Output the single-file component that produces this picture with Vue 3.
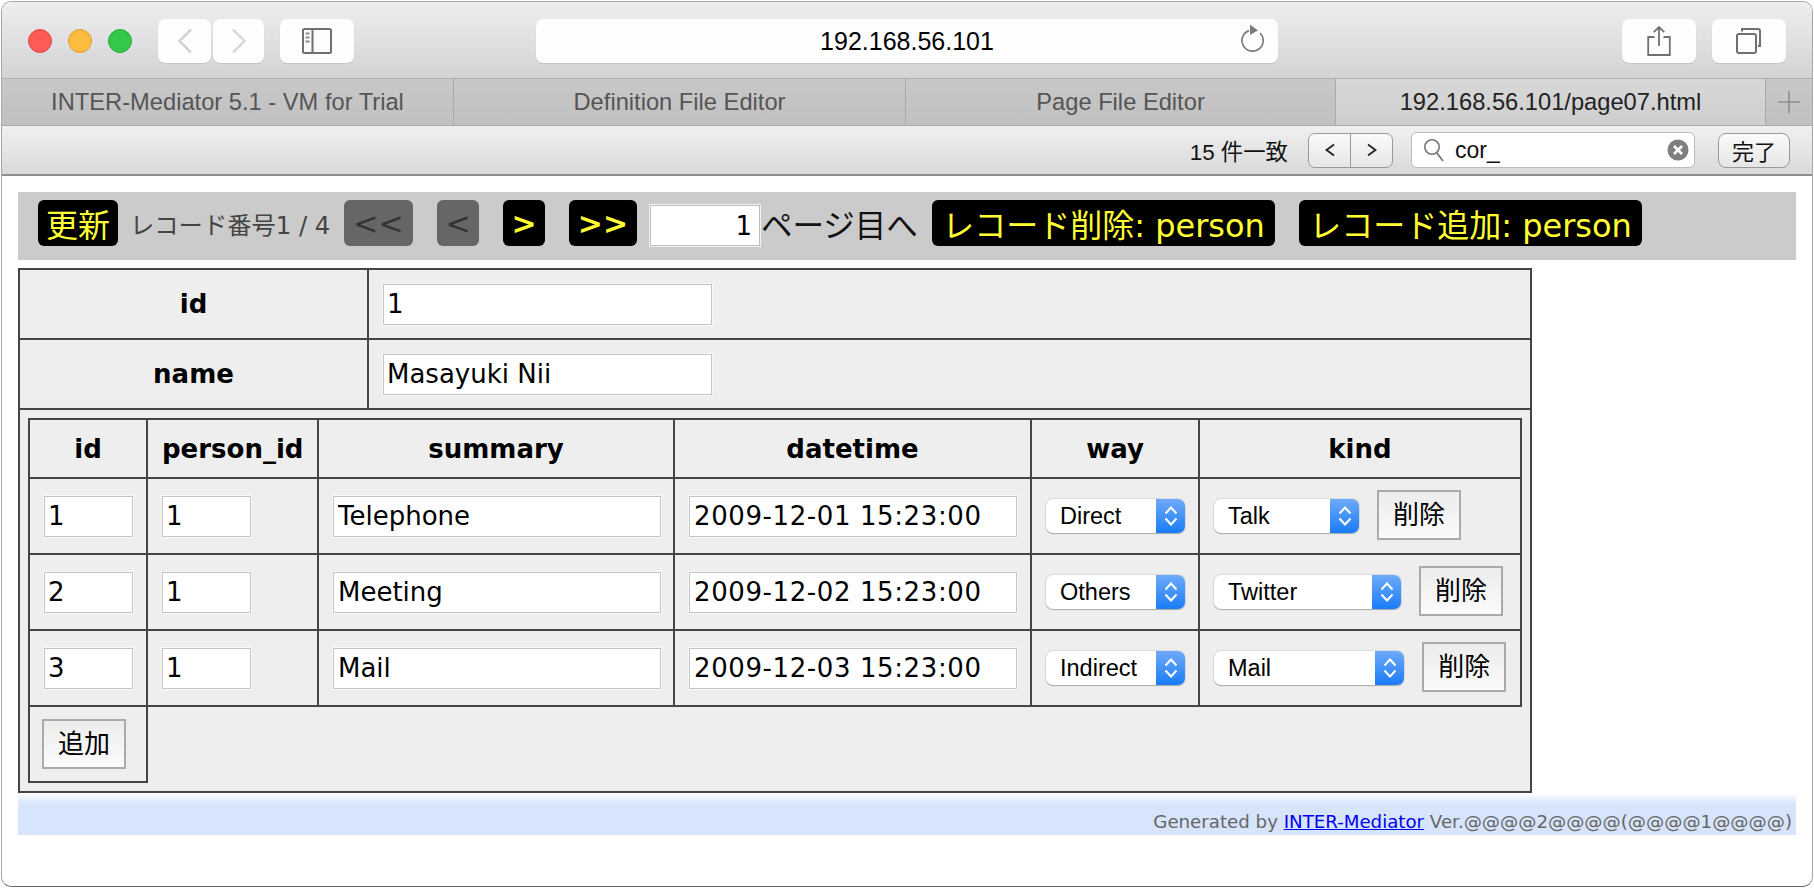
<script setup>
const tabs = [
  { label: 'INTER-Mediator 5.1 - VM for Trial', width: 452 },
  { label: 'Definition File Editor', width: 452 },
  { label: 'Page File Editor', width: 430 },
  { label: '192.168.56.101/page07.html', width: 430, active: true }
]
const rows = [
  { id: '1', pid: '1', summary: 'Telephone', dt: '2009-12-01 15:23:00', way: 'Direct', kind: 'Talk', kw: 145 },
  { id: '2', pid: '1', summary: 'Meeting', dt: '2009-12-02 15:23:00', way: 'Others', kind: 'Twitter', kw: 187 },
  { id: '3', pid: '1', summary: 'Mail', dt: '2009-12-03 15:23:00', way: 'Indirect', kind: 'Mail', kw: 191 }
]
</script>

<template>
  <div class="window">
    <header class="toolbar">
      <span class="light red"></span>
      <span class="light yellow"></span>
      <span class="light green"></span>
      <div class="tb back">
        <svg width="16" height="26" viewBox="0 0 16 26"><path d="M14 1.500 2.500 13 14 24.500" fill="none" stroke="#cfcfcf" stroke-width="2.400"/></svg>
      </div>
      <div class="tb fwd">
        <svg width="16" height="26" viewBox="0 0 16 26"><path d="M2 1.500 13.500 13 2 24.500" fill="none" stroke="#d6d6d6" stroke-width="2.400"/></svg>
      </div>
      <div class="tb side">
        <svg width="30" height="26" viewBox="0 0 30 26"><rect x="1" y="1" width="28" height="24" rx="1.500" fill="none" stroke="#707070" stroke-width="2"/><path d="M10.500 1v24" stroke="#707070" stroke-width="2"/><path d="M3.500 5.500h4M3.500 9.500h4M3.500 13.500h4" stroke="#8a8a8a" stroke-width="2"/></svg>
      </div>
      <div class="address">
        <span>192.168.56.101</span>
        <svg class="reload" width="24" height="30" viewBox="0 0 24 30"><path d="M9 7.600A10.600 10.600 0 1 0 20 10" fill="none" stroke="#7d7d7d" stroke-width="1.700"/><path d="M10 1.500 18 7.500 10 12z" fill="#7d7d7d"/></svg>
      </div>
      <div class="tb share">
        <svg width="24" height="30" viewBox="0 0 24 30"><path d="M7.500 11H1.200v18h21.600V11h-6.300" fill="none" stroke="#707070" stroke-width="1.800"/><path d="M12 1v19M6.800 6.200 12 1l5.200 5.200" fill="none" stroke="#707070" stroke-width="1.800"/></svg>
      </div>
      <div class="tb tabsbtn">
        <svg width="26" height="26" viewBox="0 0 26 26"><rect x="1" y="6" width="19" height="19" rx="2" fill="none" stroke="#707070" stroke-width="2"/><path d="M6 3.500V1h16a2 2 0 0 1 2 2v15h-2" fill="none" stroke="#707070" stroke-width="2"/></svg>
      </div>
    </header>

    <nav class="tabbar">
      <div v-for="t in tabs" :key="t.label" class="tab" :class="{ active: t.active }" :style="{ width: t.width + 'px' }">{{ t.label }}</div>
      <div class="plus">
        <svg width="24" height="24" viewBox="0 0 24 24"><path d="M12 1v22M1 12h22" stroke="#8e8e8e" stroke-width="1.600"/></svg>
      </div>
    </nav>

    <div class="findbar">
      <span class="count">15 件一致</span>
      <div class="stepper">
        <span class="step"><svg width="12" height="14" viewBox="0 0 12 14"><path d="M10 1.500 2.500 7 10 12.500" fill="none" stroke="#222" stroke-width="1.800"/></svg></span>
        <span class="step second"><svg width="12" height="14" viewBox="0 0 12 14"><path d="M2 1.500 9.500 7 2 12.500" fill="none" stroke="#222" stroke-width="1.800"/></svg></span>
      </div>
      <div class="search">
        <svg width="22" height="26" viewBox="0 0 22 26"><circle cx="9" cy="10" r="7.200" fill="none" stroke="#777" stroke-width="1.600"/><path d="m14 16 6 8" stroke="#777" stroke-width="1.800"/></svg>
        <span class="query">cor_</span>
        <svg class="clear" width="22" height="22" viewBox="0 0 22 22"><circle cx="11" cy="11" r="10.500" fill="#7f7f7f"/><path d="m7 7 8 8M15 7l-8 8" stroke="#fff" stroke-width="2.600"/></svg>
      </div>
      <button class="done">完了</button>
    </div>

    <main class="page">
      <div class="nav">
        <span class="nb update">更新</span>
        <span class="info">レコード番号1 / 4</span>
        <span class="nb off first">&lt;&lt;</span>
        <span class="nb off prev">&lt;</span>
        <span class="nb next">&gt;</span>
        <span class="nb last">&gt;&gt;</span>
        <input class="pageno" value="1" />
        <span class="goto">ページ目へ</span>
        <span class="nb del">レコード削除: person</span>
        <span class="nb add">レコード追加: person</span>
      </div>

      <table class="outer">
        <colgroup><col class="c-label" /><col /></colgroup>
        <tbody>
          <tr class="head-row">
            <th>id</th>
            <td><input class="field wide" value="1" /></td>
          </tr>
          <tr class="head-row">
            <th>name</th>
            <td><input class="field wide" value="Masayuki Nii" /></td>
          </tr>
          <tr>
            <td colspan="2" class="holder">
              <table class="inner">
                <colgroup>
                  <col class="c1" /><col class="c2" /><col class="c3" /><col class="c4" /><col class="c5" /><col />
                </colgroup>
                <thead>
                  <tr>
                    <th>id</th><th>person_id</th><th>summary</th><th>datetime</th><th>way</th><th>kind</th>
                  </tr>
                </thead>
                <tbody>
                  <tr v-for="r in rows" :key="r.id" class="data">
                    <td><input class="field tiny" :value="r.id" /></td>
                    <td><input class="field tiny" :value="r.pid" /></td>
                    <td><input class="field mid" :value="r.summary" /></td>
                    <td><input class="field mid stamp" :value="r.dt" /></td>
                    <td>
                      <div class="sel way">
                        <span class="sel-text">{{ r.way }}</span>
                        <span class="sel-arrow"><svg width="14" height="22" viewBox="0 0 14 22"><path d="M1.500 8.500 7 2.500l5.500 6M1.500 13.500l5.500 6 5.500-6" fill="none" stroke="#fff" stroke-width="2"/></svg></span>
                      </div>
                    </td>
                    <td>
                      <div class="kindcell">
                        <div class="sel" :style="{ width: r.kw + 'px' }">
                          <span class="sel-text">{{ r.kind }}</span>
                          <span class="sel-arrow"><svg width="14" height="22" viewBox="0 0 14 22"><path d="M1.500 8.500 7 2.500l5.500 6M1.500 13.500l5.500 6 5.500-6" fill="none" stroke="#fff" stroke-width="2"/></svg></span>
                        </div>
                        <button class="act">削除</button>
                      </div>
                    </td>
                  </tr>
                  <tr class="addrow">
                    <td><button class="act">追加</button></td>
                  </tr>
                </tbody>
              </table>
            </td>
          </tr>
        </tbody>
      </table>

      <footer class="foot">
        Generated by <a href="#">INTER-Mediator</a> Ver.@@@@2@@@@(@@@@1@@@@)
      </footer>
    </main>
  </div>
</template>

<style scoped>
.window {
  box-sizing: border-box;
  width: 1812px;
  height: 886px;
  margin: 1px 0 0 1px;
  border: 1px solid #a8a8a8;
  border-bottom-color: #666;
  border-radius: 10px;
  overflow: hidden;
  background: #fff;
  font-family: "DejaVu Sans", sans-serif;
  color: #000;
}
.toolbar {
  display: flex;
  align-items: center;
  box-sizing: border-box;
  height: 77px;
  padding: 2px 0 0 26px;
  background: linear-gradient(#eeedef, #d3d2d4);
  border-bottom: 1px solid #b0b0b0;
}
.light {
  width: 24px;
  height: 24px;
  border-radius: 50%;
  margin-right: 16px;
  box-sizing: border-box;
}
.red { background: #fc5b57; border: 1px solid #e04a45; }
.yellow { background: #fdbc40; border: 1px solid #df9f30; }
.green { background: #33c848; border: 1px solid #29ab3a; }
.tb, .address {
  display: flex;
  align-items: center;
  justify-content: center;
  box-sizing: border-box;
  height: 44px;
  background: #fdfdfd;
  border-radius: 7px;
  box-shadow: 0 1px 1px #c4c4c4;
}
.back { width: 53px; margin-left: 10px; }
.fwd { width: 51px; margin-left: 2px; }
.side { width: 74px; margin-left: 16px; }
.address {
  position: relative;
  width: 742px;
  margin-left: 182px;
  font: 25px "Liberation Sans", sans-serif;
}
.reload { position: absolute; right: 14px; top: 4px; }
.share { width: 74px; margin-left: 344px; }
.tabsbtn { width: 74px; margin-left: 16px; }

.tabbar {
  display: flex;
  height: 47px;
  box-sizing: border-box;
  background: linear-gradient(#c9c8c9, #c1c0c1);
  border-bottom: 1px solid #a9a9a9;
  font: 23.700px "Liberation Sans", sans-serif;
}
.tab {
  display: flex;
  align-items: center;
  justify-content: center;
  box-sizing: border-box;
  border-right: 1px solid #aaa;
  color: #555;
}
.tab.active {
  color: #222;
  background: linear-gradient(#d9d8d9, #cfcecf);
}
.plus {
  flex: 1;
  display: flex;
  align-items: center;
  justify-content: center;
}
.findbar {
  display: flex;
  align-items: center;
  justify-content: flex-end;
  box-sizing: border-box;
  height: 50px;
  padding: 0 22px 0 0;
  background: linear-gradient(#f0f0f0, #d9d9d9);
  border-bottom: 2px solid #8f8f8f;
  font-family: "Liberation Sans", "Noto Sans CJK JP", sans-serif;
}
.count { font-size: 22.400px; color: #111; }
.stepper {
  display: flex;
  width: 85px;
  height: 35px;
  margin-left: 20px;
  box-sizing: border-box;
  border: 1.500px solid #999;
  border-radius: 7px;
  background: linear-gradient(#fafafa, #e6e6e6);
}
.step {
  flex: 1;
  display: flex;
  align-items: center;
  justify-content: center;
}
.step.second { border-left: 1px solid #999; }
.search {
  display: flex;
  align-items: center;
  width: 284px;
  height: 36px;
  margin-left: 18px;
  padding: 0 5px 0 11px;
  box-sizing: border-box;
  border: 1px solid #bcbcbc;
  border-radius: 6px;
  background: #fff;
}
.query { flex: 1; margin-left: 10px; font-size: 23px; color: #111; }
.done {
  width: 72px;
  height: 35px;
  margin-left: 23px;
  padding: 0;
  box-sizing: border-box;
  border: 1.500px solid #999;
  border-radius: 8px;
  background: linear-gradient(#fafafa, #e6e6e6);
  font: 22px "Noto Sans CJK JP", sans-serif;
  color: #111;
}

.page { padding: 16px 16px 0; }
.nav {
  display: flex;
  align-items: flex-start;
  height: 68px;
  box-sizing: border-box;
  padding: 8px 0 0 20px;
  background: #cbcbcb;
}
.nb {
  display: flex;
  align-items: center;
  justify-content: center;
  box-sizing: border-box;
  height: 46px;
  background: #000;
  color: #ff3;
  border-radius: 6px;
  font: 32px "DejaVu Sans", "Noto Sans CJK JP", sans-serif;
  white-space: nowrap;
}
.nb.off { background: #666; color: #333; }
.update { width: 80px; }
.info {
  display: flex;
  align-items: center;
  height: 46px;
  margin-left: 12px;
  width: 214px;
  color: #444;
  font: 24.300px "DejaVu Sans", "Noto Sans CJK JP", sans-serif;
  white-space: nowrap;
}
.first { width: 69px; font-size: 30px; }
.prev { width: 42px; margin-left: 24px; font-size: 30px; }
.next { width: 42px; margin-left: 24px; font-weight: bold; font-size: 30px; }
.last { width: 68px; margin-left: 24px; font-weight: bold; font-size: 30px; }
.pageno {
  width: 112px;
  height: 43px;
  margin: 4px 0 0 12px;
  padding: 0 8px 0 0;
  box-sizing: border-box;
  border: 1px solid #f2f2f2;
  box-shadow: inset 0 0 0 1px #bdbdbd;
  background: #fff;
  text-align: right;
  font: 26px "DejaVu Sans", sans-serif;
  outline: none;
}
.goto {
  display: flex;
  align-items: center;
  height: 46px;
  width: 171px;
  font: 31.500px "Noto Sans CJK JP", sans-serif;
  color: #111;
  white-space: nowrap;
}
.del { width: 343px; }
.add { width: 343px; margin-left: 24px; }

table { border-collapse: collapse; table-layout: fixed; }
.outer {
  width: 1514px;
  margin-top: 8px;
  background: #eee;
}
.outer > tbody > tr > th,
.outer > tbody > tr > td {
  border: 2px solid #444;
  padding: 0;
}
.c-label { width: 349px; }
.head-row { height: 70px; }
.head-row th { padding-top: 2px; }
th { font-size: 26px; font-weight: bold; text-align: center; }
.head-row td { padding-left: 13px !important; }
.field {
  display: block;
  box-sizing: border-box;
  height: 43px;
  padding: 0 4px;
  border: 1px solid #f8f8f8;
  box-shadow: inset 0 0 0 1px #c4c4c4;
  background: #fff;
  font: 26px "DejaVu Sans", sans-serif;
  color: #000;
  outline: none;
}
.wide { width: 331px; }
.tiny { width: 91px; }
.mid { width: 330px; padding-left: 5px; }
.stamp { letter-spacing: 0.600px; }
.holder { padding: 8px !important; }
.inner { width: 1494px; }
.inner th, .inner td { border: 2px solid #444; padding: 0 14px; }
.inner td:nth-child(-n+4) { padding-left: 13px; }
.inner thead tr { height: 59px; }
.data { height: 76px; }
.c1 { width: 118px; }
.c2 { width: 171px; }
.c3 { width: 356px; }
.c4 { width: 357px; }
.c5 { width: 168px; }
.sel {
  display: flex;
  height: 34px;
  box-sizing: border-box;
  border-radius: 7px;
  background: #fff;
  box-shadow: 0 1px 1px #aaa, 0 0 0 1px #dcdcdc;
  overflow: hidden;
  font: 23.500px "Liberation Sans", sans-serif;
}
.way { width: 139px; }
.sel-text { flex: 1; padding-left: 14px; line-height: 34px; }
.sel-arrow {
  width: 29px;
  display: flex;
  align-items: center;
  justify-content: center;
  background: linear-gradient(#6eaafa, #1a7cf7);
}
.kindcell { display: flex; align-items: center; }
.kindcell .act { margin-left: 18px; position: relative; top: -1px; }
.act {
  width: 84px;
  height: 50px;
  padding: 0 0 5px;
  box-sizing: border-box;
  border: 2px solid #aaa;
  background: linear-gradient(#ececec, #fbfbfb);
  font: 26px "Noto Sans CJK JP", sans-serif;
  color: #000;
}
.addrow { height: 76px; }
.inner .addrow td { padding-left: 12px; }
.foot {
  height: 40px;
  margin-top: 2px;
  padding: 14px 4px 0 0;
  box-sizing: border-box;
  text-align: right;
  background: linear-gradient(#f6f9ff, #d6e4fc 10px);
  color: #666;
  font-size: 18.200px;
  line-height: 26px;
  white-space: nowrap;
}
.foot a { color: #00e; }
</style>

<style>
html, body { margin: 0; background: #fff; overflow: hidden; }
</style>
